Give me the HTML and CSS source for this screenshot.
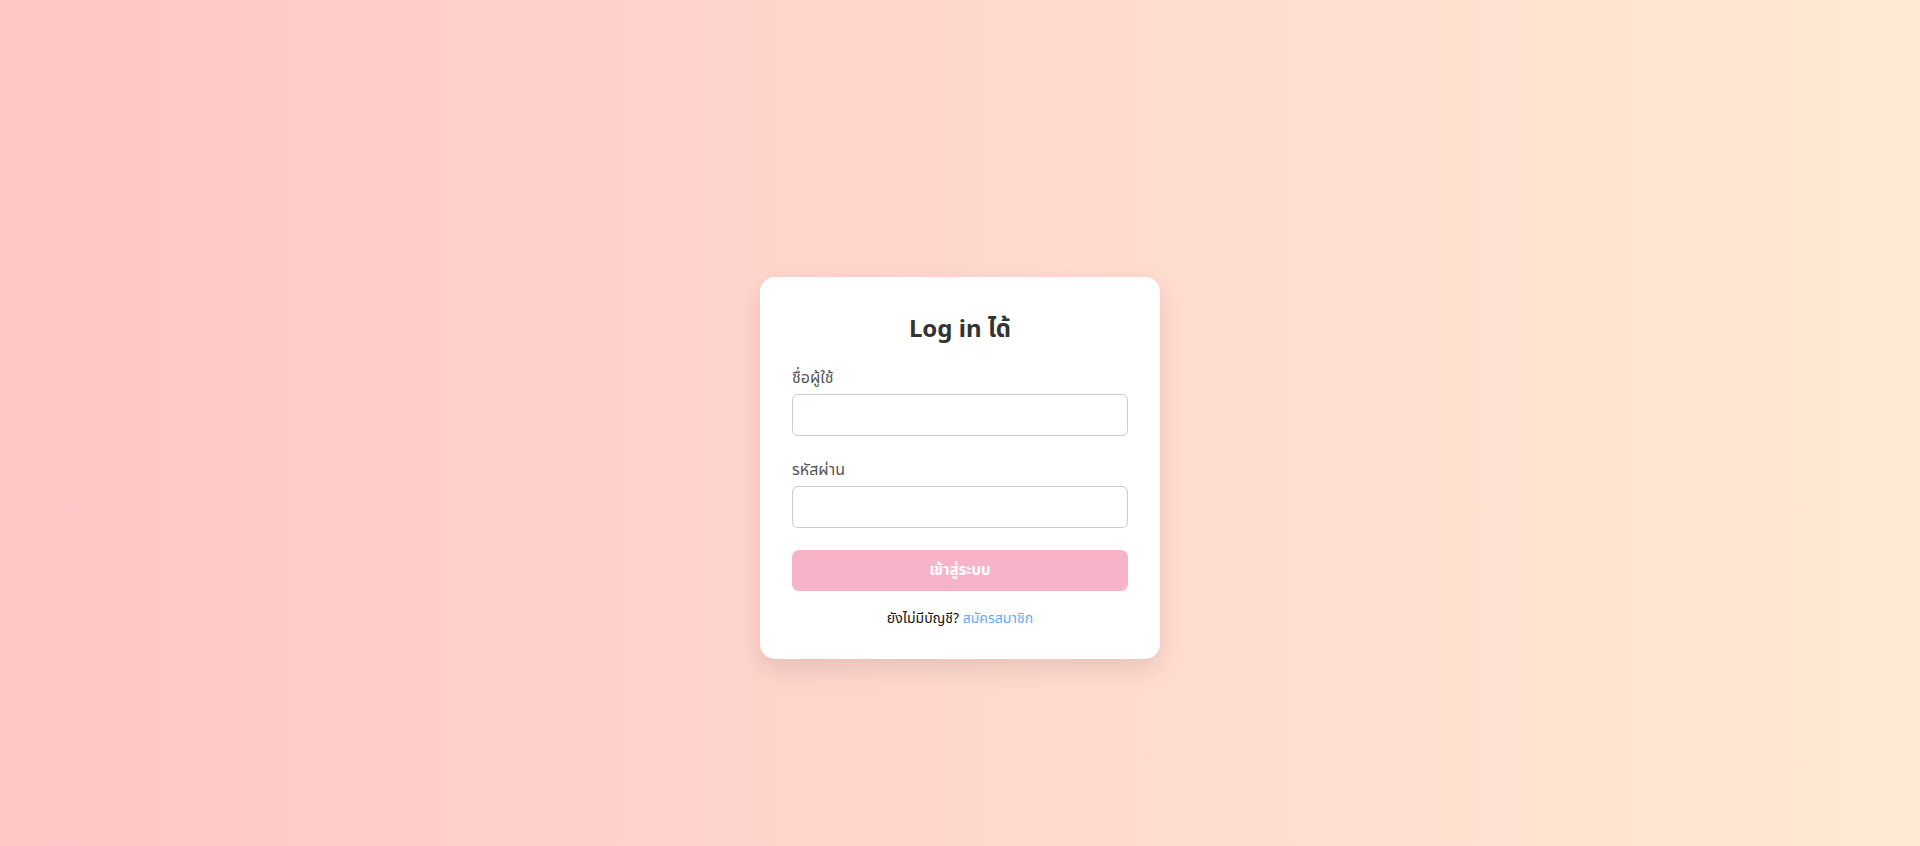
FILE: index.html
```html
<!DOCTYPE html>
<html lang="th">
<head>
<meta charset="utf-8">
<title>Log in</title>
<link rel="stylesheet" href="styles.css">
</head>
<body>
<main class="page">
  <form class="card">
    <h2 class="title">Log in ได้</h2>
    <div class="field">
      <label class="label" for="u">ชื่อผู้ใช้</label>
      <input class="input" id="u" type="text">
    </div>
    <div class="field">
      <label class="label" for="p">รหัสผ่าน</label>
      <input class="input" id="p" type="password">
    </div>
    <button class="btn" type="button">เข้าสู่ระบบ</button>
    <p class="footer">ยังไม่มีบัญชี? <a class="link" href="#">สมัครสมาชิก</a></p>
  </form>
</main>
</body>
</html>
```
FILE: styles.css
```css
* { box-sizing: border-box; }
html, body { margin: 0; padding: 0; height: 100%; }
body {
  font-family: "Segoe UI", "Noto Sans", "Noto Sans Thai", "Leelawadee UI", sans-serif;
  background: linear-gradient(to right, #ffc6c6, #ffead4);
  overflow: hidden;
}
.page {
  height: 100vh;
  display: flex;
  justify-content: center;
  align-items: flex-start;
  padding-top: 277px;
}
.card {
  width: 400px;
  background: #fff;
  border-radius: 15px;
  padding: 36px 32px 31px;
  box-shadow: 0 10px 25px rgba(0, 0, 0, 0.1);
}
.title {
  margin: 0 0 24px;
  text-align: center;
  font-size: 24px;
  line-height: 29px;
  font-weight: 700;
  color: #333;
}
.field { margin-bottom: 22px; }
.label {
  display: block;
  font-size: 16px;
  line-height: 22px;
  color: #555;
  margin-bottom: 6px;
}
.input {
  display: block;
  width: 100%;
  height: 42px;
  border: 1px solid #ccc;
  border-radius: 6px;
  padding: 8px 12px;
  font-size: 16px;
  background: #fff;
}
.btn {
  display: block;
  width: 100%;
  height: 41px;
  border: none;
  border-radius: 7px;
  background: #f7b4c9;
  color: #fff;
  font-family: inherit;
  font-size: 15px;
  font-weight: 700;
}
.footer {
  margin: 17px 0 0;
  text-align: center;
  font-size: 14px;
  line-height: 20px;
  color: #111;
}
.link {
  color: #66a8ff;
  text-decoration: none;
}
```
